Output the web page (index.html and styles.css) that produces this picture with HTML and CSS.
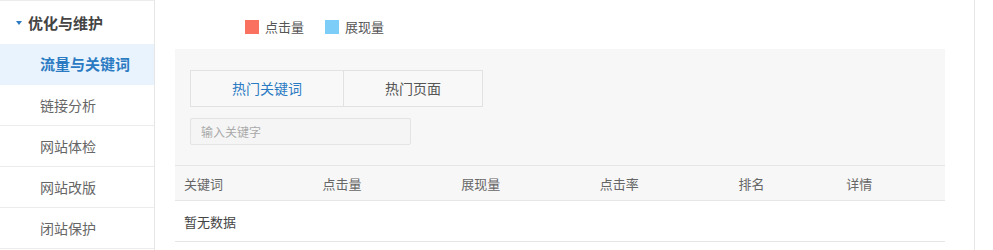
FILE: index.html
```html
<!DOCTYPE html>
<html lang="zh-CN">
  <head>
    <meta charset="UTF-8" />
    <meta name="viewport" content="width=device-width, initial-scale=1.0" />
    <title>流量与关键词</title>
    <link rel="stylesheet" href="styles.css">
  </head>
  <body>
    <div class="layout">
      <div class="sidebar">
        <div class="menu-group">
          <span class="arrow"></span>
          <span>优化与维护</span>
        </div>
        <a class="menu-item active" href="#">流量与关键词</a>
        <a class="menu-item" href="#">链接分析</a>
        <a class="menu-item" href="#">网站体检</a>
        <a class="menu-item" href="#">网站改版</a>
        <a class="menu-item" href="#">闭站保护</a>
      </div>

      <div class="main">
        <div class="legend">
          <span class="legend-item"><i class="swatch click"></i>点击量</span>
          <span class="legend-item"><i class="swatch show"></i>展现量</span>
        </div>

        <div class="panel">
          <div class="tabs">
            <div class="tab active">热门关键词</div>
            <div class="tab">热门页面</div>
          </div>
          <input type="text" class="search-input" placeholder="输入关键字" />
        </div>

        <table class="data-table">
          <thead>
            <tr>
              <th class="col-wide">关键词</th>
              <th class="col-wide">点击量</th>
              <th class="col-wide">展现量</th>
              <th class="col-wide">点击率</th>
              <th class="col-narrow">排名</th>
              <th class="col-narrow">详情</th>
            </tr>
          </thead>
          <tbody>
            <tr>
              <td colspan="6">暂无数据</td>
            </tr>
          </tbody>
        </table>
      </div>
    </div>
  </body>
</html>
```

FILE: styles.css
```css
* {
  margin: 0;
  padding: 0;
  box-sizing: border-box;
}

body {
  font-family: "Noto Sans CJK SC", "Microsoft YaHei", sans-serif;
  background: #fff;
  color: #555;
  overflow: hidden;
}

.layout {
  display: flex;
  width: 975px;
  height: 250px;
}

/* Sidebar */
.sidebar {
  width: 155px;
  flex-shrink: 0;
  border-right: 1px solid #e6e6e6;
}

.menu-group {
  display: flex;
  align-items: center;
  height: 44px;
  border-top: 1px solid #ececec;
  padding-left: 16px;
  font-size: 15px;
  font-weight: 700;
  color: #444;
}

.arrow {
  width: 0;
  height: 0;
  border-left: 3.5px solid transparent;
  border-right: 3.5px solid transparent;
  border-top: 4px solid #2b7bc3;
  margin-right: 6px;
  margin-top: 1px;
}

.menu-item {
  display: block;
  height: 41px;
  line-height: 40px;
  padding-left: 40px;
  font-size: 14px;
  color: #666;
  text-decoration: none;
  border-bottom: 1px solid #ececec;
}

.menu-item.active {
  background: #e8f3fd;
  color: #2b7bc3;
  font-weight: 700;
  font-size: 15px;
  border-bottom-color: #e8f3fd;
}

/* Main */
.main {
  flex: 1;
  padding: 20px 29px 0 20px;
  border-right: 1px solid #e6e6e6;
}

.legend {
  display: flex;
  gap: 21px;
  height: 14px;
  margin: 0 0 15px 70px;
}

.legend-item {
  display: flex;
  align-items: center;
  gap: 6px;
  font-size: 13px;
  line-height: 14px;
  color: #555;
}

.swatch {
  width: 14px;
  height: 14px;
  display: inline-block;
}

.swatch.click {
  background: #fb715f;
}

.swatch.show {
  background: #7ccef8;
}

.panel {
  background: #f7f7f7;
  padding: 21px 15px 20px;
}

.tabs {
  display: flex;
  margin-bottom: 11px;
}

.tab {
  height: 37px;
  line-height: 35px;
  padding: 0 41px;
  border: 1px solid #e2e2e2;
  font-size: 14px;
  color: #555;
  background: #f8f8f8;
}

.tab + .tab {
  border-left: none;
}

.tab.active {
  color: #2b7bc3;
}

.search-input {
  display: block;
  width: 221px;
  height: 27px;
  padding: 0 10px;
  border: 1px solid #e4e4e4;
  border-radius: 2px;
  background: #f5f5f5;
  font-family: inherit;
  font-size: 12px;
  outline: none;
}

.search-input::placeholder {
  color: #aaa;
}

/* Table */
.data-table {
  width: 100%;
  border-collapse: collapse;
  table-layout: fixed;
  font-size: 13px;
}

.data-table th {
  text-align: left;
  font-weight: 400;
  color: #666;
  height: 35px;
  padding-left: 9px;
  background: #f7f7f7;
  border-top: 1px solid #e6e6e6;
  border-bottom: 1px solid #e6e6e6;
}

.col-wide {
  width: 18%;
}

.col-narrow {
  width: 14%;
}

.data-table td {
  height: 41px;
  padding-left: 9px;
  color: #444;
  border-bottom: 1px solid #e6e6e6;
}
```
